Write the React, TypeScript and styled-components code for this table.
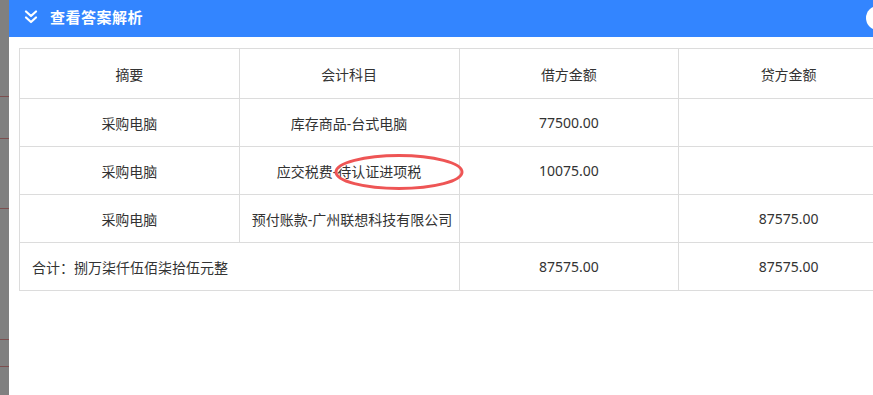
import React from "react";
import styled, { createGlobalStyle } from "styled-components";

const Global = createGlobalStyle`
  html, body { margin: 0; padding: 0; background: #fff; }
  body { font-family: "Noto Sans", "Noto Sans CJK SC", sans-serif; overflow: hidden; }
`;

const Page = styled.div`
  display: flex;
  width: 873px;
  height: 395px;
  overflow: hidden;
`;

const Backdrop = styled.div`
  position: relative;
  width: 9px;
  flex: 0 0 9px;
  background: #808080;
  overflow: hidden;
`;

const Mark = styled.div<{ $top: number }>`
  position: absolute;
  left: 0;
  top: ${(p) => p.$top}px;
  width: 9px;
  height: 1px;
  background: #7a3a3a;
  opacity: 0.7;
`;

const Panel = styled.div`
  position: relative;
  flex: 1;
  display: flex;
  flex-direction: column;
  overflow: hidden;
`;

const Header = styled.div`
  height: 37px;
  flex: 0 0 37px;
  box-sizing: border-box;
  background: #3385ff;
  display: flex;
  align-items: center;
  padding: 0 0 4px 15px;
  gap: 12px;
  position: relative;
`;

const Title = styled.span`
  color: #fff;
  font-family: "Noto Sans CJK SC", sans-serif;
  font-weight: 700;
  font-size: 15px;
  letter-spacing: 0.5px;
`;

const CloseDot = styled.div`
  position: absolute;
  right: -17px;
  top: 6px;
  width: 24px;
  height: 24px;
  border-radius: 50%;
  background: #fff;
`;

const Body = styled.div`
  position: relative;
  padding: 11px 0 0 10px;
`;

const Table = styled.table`
  border-collapse: collapse;
  table-layout: fixed;
  width: 880px;
  font-size: 14px;
  color: #333;
`;

const Cell = styled.td<{ $left?: boolean }>`
  border: 1px solid #dcdcdc;
  height: 47px;
  padding: 0 12px;
  text-align: ${(p) => (p.$left ? "left" : "center")};
  vertical-align: middle;
  font-family: "Noto Sans", "Noto Sans CJK SC", sans-serif;
  white-space: nowrap;
`;

const HeadCell = styled(Cell).attrs({ as: "th" })`
  font-weight: 400;
  height: 49px;
`;

const Ellipse = styled.svg`
  position: absolute;
  left: 326px;
  top: 117px;
  overflow: visible;
`;

const Chevrons = () => (
  <svg width="14" height="14" viewBox="0 0 14 14" fill="none">
    <path d="M2 1.5 L7 6 L12 1.5" stroke="#fff" strokeWidth="2.2" strokeLinecap="round" strokeLinejoin="round" />
    <path d="M2 7.5 L7 12 L12 7.5" stroke="#fff" strokeWidth="2.2" strokeLinecap="round" strokeLinejoin="round" />
  </svg>
);

const rows = [
  { a: "采购电脑", b: "库存商品-台式电脑", c: "77500.00", d: "" },
  { a: "采购电脑", b: "应交税费-待认证进项税", c: "10075.00", d: "" },
  { a: "采购电脑", b: "预付账款-广州联想科技有限公司", c: "", d: "87575.00" },
];

export default function App() {
  return (
    <>
      <Global />
      <Page>
        <Backdrop>
          <Mark $top={96} />
          <Mark $top={138} />
          <Mark $top={208} />
          <Mark $top={339} />
          <Mark $top={366} />
        </Backdrop>
        <Panel>
          <Header>
            <Chevrons />
            <Title>查看答案解析</Title>
            <CloseDot />
          </Header>
          <Body>
            <Table>
              <thead>
                <tr>
                  <HeadCell>摘要</HeadCell>
                  <HeadCell>会计科目</HeadCell>
                  <HeadCell>借方金额</HeadCell>
                  <HeadCell>贷方金额</HeadCell>
                </tr>
              </thead>
              <tbody>
                {rows.map((r, i) => (
                  <tr key={i}>
                    <Cell>{r.a}</Cell>
                    <Cell>{r.b}</Cell>
                    <Cell>{r.c}</Cell>
                    <Cell>{r.d}</Cell>
                  </tr>
                ))}
                <tr>
                  <Cell $left colSpan={2}>合计：捌万柒仟伍佰柒拾伍元整</Cell>
                  <Cell>87575.00</Cell>
                  <Cell>87575.00</Cell>
                </tr>
              </tbody>
            </Table>
            <Ellipse width="130" height="36" viewBox="0 0 130 36">
              <ellipse cx="64" cy="18" rx="63" ry="16.5" stroke="#ee5555" strokeWidth="3" fill="none" />
            </Ellipse>
          </Body>
        </Panel>
      </Page>
    </>
  );
}
